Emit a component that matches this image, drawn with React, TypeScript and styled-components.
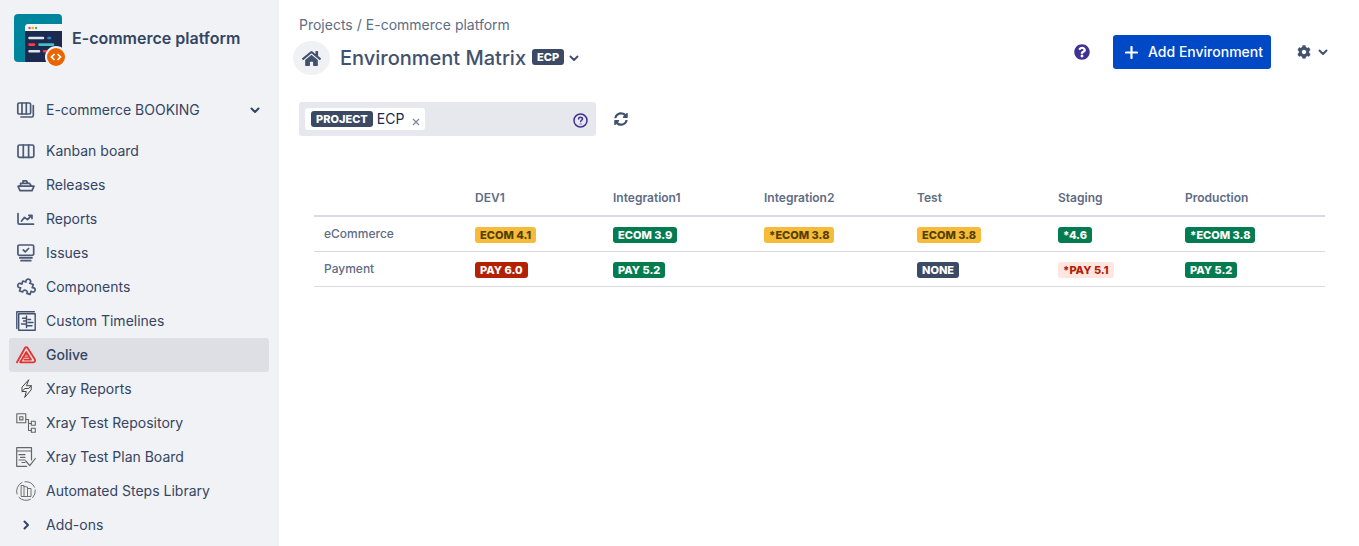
import React from "react";
import styled, { createGlobalStyle, css } from "styled-components";
import { FaCog, FaHome, FaQuestionCircle, FaSyncAlt } from "react-icons/fa";

const colors = {
  navy: "#344563",
  slate: "#42526e",
  muted: "#5e6c84",
  line: "#d8dce2",
  sidebar: "#f1f2f6",
  blue: "#0049c6",
  purple: "#403294",
};

const GlobalStyle = createGlobalStyle`
  *, *::before, *::after { box-sizing: border-box; }
  body {
    margin: 0;
    background: #fff;
    color: ${colors.navy};
    font: 14px/20px Inter, "Liberation Sans", sans-serif;
  }
  button, input { font: inherit; color: inherit; }
  svg { display: block; flex: none; }
`;

const Page = styled.div`
  display: flex;
  min-height: 100vh;
`;

const Sidebar = styled.aside`
  flex: 0 0 279px;
  padding: 14px 10px 4px 9px;
  background: ${colors.sidebar};
`;

const ProjectHeader = styled.div`
  display: flex;
  align-items: center;
  gap: 6px;
  padding-left: 5px;
  height: 54px;
  margin-bottom: 25px;
`;

const ProjectName = styled.h2`
  margin: 0;
  padding-bottom: 6px;
  font-size: 16px;
  line-height: 24px;
  font-weight: 600;
`;

const navRow = css`
  display: flex;
  align-items: center;
  gap: 10px;
  width: 100%;
  height: 34px;
  padding: 0 9px 0 7px;
  border: 0;
  border-radius: 3px;
  color: ${colors.navy};
  text-align: left;
  text-decoration: none;
`;

const BoardSwitcher = styled.button`
  ${navRow}
  margin-bottom: 7px;
  background: transparent;
`;

const NavLabel = styled.span`
  flex: 1;
`;

const NavList = styled.nav`
  display: flex;
  flex-direction: column;
`;

const NavLink = styled.a<{ $active?: boolean }>`
  ${navRow}
  background: ${(p) => (p.$active ? "#dedfe4" : "transparent")};
  font-weight: ${(p) => (p.$active ? 500 : 400)};
`;

const Main = styled.main`
  flex: 1;
  min-width: 0;
  padding: 15px 31px 24px 20px;
`;

const Header = styled.header`
  display: flex;
  justify-content: space-between;
  align-items: flex-start;
  margin-bottom: 27px;
`;

const Breadcrumbs = styled.nav`
  display: flex;
  gap: 4px;
  margin-bottom: 6px;
  color: ${colors.muted};
`;

const Crumb = styled.a`
  color: inherit;
  text-decoration: none;
`;

const TitleRow = styled.div`
  display: flex;
  align-items: center;
  margin-left: -6px;
`;

const HomeLink = styled.a`
  display: grid;
  place-items: center;
  width: 37px;
  height: 34px;
  margin-right: 10px;
  border-radius: 50%;
  background: #f0f1f5;
  color: ${colors.slate};
`;

const Title = styled.h1`
  margin: 0 6px 0 0;
  color: ${colors.slate};
  font-size: 20px;
  line-height: 32px;
  font-weight: 500;
`;

const tones = {
  dark: ["#3b4964", "#fff"],
  yellow: ["#f6bb38", "#533f04"],
  green: ["#047c50", "#fff"],
  red: ["#b32102", "#fff"],
  softRed: ["#ffe6e1", "#b32102"],
};
type Tone = keyof typeof tones;

const Lozenge = styled.span<{ $tone: Tone }>`
  display: inline-block;
  padding: 0 5px;
  border-radius: 3px;
  background: ${(p) => tones[p.$tone][0]};
  color: ${(p) => tones[p.$tone][1]};
  font-size: 11px;
  line-height: 16px;
  font-weight: 800;
  white-space: nowrap;
  vertical-align: top;
`;

const TitleBadge = styled(Lozenge)`
  margin-bottom: 3px;
`;

const IconButton = styled.button`
  display: flex;
  align-items: center;
  gap: 7px;
  padding: 0;
  border: 0;
  background: transparent;
  color: ${colors.slate};
`;

const TitleMenu = styled(IconButton)`
  margin-left: 5px;
`;

const Actions = styled.div`
  display: flex;
  align-items: center;
  padding-top: 20px;
`;

const HelpButton = styled(IconButton)`
  margin-right: 23px;
  color: ${colors.purple};
`;

const AddButton = styled.button`
  display: flex;
  align-items: center;
  gap: 10px;
  height: 34px;
  margin-right: 26px;
  padding: 0 8px 0 12px;
  border: 0;
  border-radius: 3px;
  background: ${colors.blue};
  color: #fff;
  font-weight: 500;
  white-space: nowrap;
`;

const FilterBar = styled.form`
  display: flex;
  align-items: center;
  gap: 18px;
  margin-bottom: 44px;
`;

const FilterBox = styled.div`
  display: flex;
  align-items: center;
  width: 297px;
  height: 34px;
  padding: 0 8px 0 6px;
  border-radius: 3px;
  background: #e7e8ee;
`;

const Chip = styled.span`
  display: flex;
  align-items: center;
  gap: 4px;
  height: 22px;
  padding: 0 5px 0 6px;
  border-radius: 3px;
  background: #fff;
  color: #172b4d;
`;

const ChipRemove = styled(IconButton)`
  margin-left: 4px;
  padding-top: 6px;
  color: #7a869a;
`;

const FilterInput = styled.input`
  flex: 1;
  min-width: 0;
  height: 22px;
  border: 0;
  outline: 0;
  background: transparent;
`;

const FilterHelp = styled(IconButton)`
  padding-top: 2px;
  color: ${colors.purple};
`;

const TableWrap = styled.div`
  padding: 0 3px 0 15px;
`;

const Matrix = styled.table`
  width: 100%;
  table-layout: fixed;
  border-collapse: separate;
  border-spacing: 0;
  color: ${colors.muted};
  font-size: 12px;
  line-height: 16px;

  th, td {
    padding: 10px 10px 9px;
    text-align: left;
    vertical-align: top;
    font-weight: 600;
    border-bottom: 1px solid ${colors.line};
  }
  thead th, thead td {
    border-bottom-width: 2px;
  }
  tbody th, tbody td {
    height: 35px;
    padding: 10px 10px 8px;
  }
  tbody th {
    padding: 9px 10px;
    font-weight: 500;
  }
`;

const Chevron = ({ right }: { right?: boolean }) => (
  <svg width={right ? 20 : 10} height="10" viewBox="0 0 10 10" fill="none" stroke="currentColor" strokeWidth="2" strokeLinecap="round" strokeLinejoin="round" aria-hidden="true">
    <path d={right ? "M3.500 1.500 7 5 3.500 8.500" : "M1.500 3.500 5 7l3.500-3.500"} />
  </svg>
);

const NavIcon = ({ children, color = "#4a5975", width = 1.7 }: { children: React.ReactNode; color?: string; width?: number }) => (
  <svg width="20" height="20" viewBox="0 0 20 20" fill="none" stroke={color} strokeWidth={width} strokeLinejoin="round" strokeLinecap="round" aria-hidden="true">
    {children}
  </svg>
);

const BoardsIcon = () => (
  <NavIcon>
    <rect x="1.800" y="3" width="12.800" height="11" rx="1.200" />
    <path d="M6 3v11M10.300 3v11M17.300 5.500v10a1.500 1.500 0 0 1-1.500 1.500H5" />
  </NavIcon>
);
const KanbanIcon = () => (
  <NavIcon>
    <rect x="2" y="4" width="15.800" height="12.300" rx="1.500" />
    <path d="M7.300 4v12.300M12.600 4v12.300" />
  </NavIcon>
);
const ReleasesIcon = () => (
  <NavIcon>
    <path d="M2 11.200h16l-2 4.500H4zM4.600 11V8.300h8.800L15.400 11M7 8.200V5.800h3.500l1.200 2.400" />
  </NavIcon>
);
const ReportsIcon = () => (
  <NavIcon>
    <path d="M2 4.500v9.200c0 .9.500 1.500 1.500 1.500h14M5.500 12l3-3.600 3 2.300 4.200-4.300M12.800 6.300h3.200v3.200" />
  </NavIcon>
);
const IssuesIcon = () => (
  <NavIcon>
    <rect x="1.900" y="2" width="15.800" height="10.300" rx="1.500" />
    <path d="m7.300 7 2 1.800 3.300-3.300M3.800 14.900h12.200M5 17.700h9.800" />
  </NavIcon>
);
const ComponentsIcon = () => (
  <NavIcon>
    <path
      transform="rotate(18 10.500 10.500)"
      d="M5 5.500h3.300C7.300 3.400 8.500 1.900 10.300 1.900s3 1.500 2 3.600H16v3.300c2-.9 3.500.2 3.500 1.900s-1.500 2.800-3.500 1.900V16h-3.300c.6-1.600-.7-2.500-2.200-2.500S7.700 14.400 8.300 16H5v-3.400c-2 .9-3.500-.2-3.500-1.900S3 7.900 5 8.800z"
    />
  </NavIcon>
);
const TimelinesIcon = () => (
  <NavIcon width={1.4} color="#42526e">
    <path d="M.8 17.500V.8h17.500" />
    <path d="M2.700 2.700h16.500v16.500H2.700zM10.500 5v11.500" />
    <path d="M6.500 7.200h4M7.500 10h3M5.500 13h5M12 8.500h2.500M12 11.500h5M11 14.700h5" />
  </NavIcon>
);
const GoliveIcon = () => (
  <NavIcon color="#e5322d" width={1.8}>
    <path d="M1 17.300 8.900 3c.7-1.200 2-1.200 2.700 0l7.200 11.300c.8 1.500 0 3-1.500 3H4.200L10.300 7l4.700 7.600H8.500" />
    <path d="M9.500 9.800h1.700M8.500 12.200h4" strokeWidth="1.300" />
  </NavIcon>
);
const BoltIcon = () => (
  <NavIcon color="#444" width={1}>
    <path d="M12.500 1 6 8.200v4.300h4.300L8.700 18.500l6.500-7.700V6.700h-4.300zM6 12.500l3-3h3.500l2.700-2.800" />
  </NavIcon>
);
const RepositoryIcon = () => (
  <NavIcon color="#666" width={1.1}>
    <rect x=".8" y=".8" width="9" height="9" />
    <rect x="3.700" y="3.700" width="3.200" height="3.200" />
    <path d="M9.800 6.500h2.700v11h3M12.500 10.500h3" />
    <rect x="15.300" y="8.300" width="4" height="4" />
    <rect x="15.300" y="15.300" width="4" height="4" />
  </NavIcon>
);
const PlanIcon = () => (
  <NavIcon color="#666" width={1.2}>
    <path d="M15.500 13V.7H.7v18.600h10M.7 4h14.800M3 7.700h6M4.500 10.300H9M3 13h6M6 15.500h3M9.800 14l4 4.700 5.500-7.200" />
  </NavIcon>
);
const LibraryIcon = () => (
  <NavIcon color="#707070" width={1}>
    <path d="M1 13A9.500 9.500 0 0 1 6 1.500M9 .7a9.500 9.500 0 0 1 9.500 5.500M19.300 9a9.500 9.500 0 0 1-2.600 7.500M14.500 18.300A9.500 9.500 0 0 1 3 16.500" />
    <path d="M5.500 4.500H8v11H5.500zM8 5.500l3.500.5v9.500H8M11.500 7.500h3.500v8h-3.500" />
  </NavIcon>
);

const ProjectAvatar = () => (
  <svg width="52" height="54" viewBox="0 0 52 54" role="img" aria-label="E-commerce platform">
    <defs><clipPath id="avatar"><rect width="48" height="48" rx="4" /></clipPath></defs>
    <g clipPath="url(#avatar)">
      <rect width="48" height="48" fill="#00869c" />
      <path d="M11 48V13a3 3 0 0 1 3-3h34v38z" fill="#1b2a4e" />
      <path d="M11 17v-4a3 3 0 0 1 3-3h34v7z" fill="#f4f5f7" />
    </g>
    <circle cx="15.500" cy="14" r="1.200" fill="#ff3d3d" />
    <circle cx="18.800" cy="14" r="1.200" fill="#ffab00" />
    <circle cx="22" cy="14" r="1.200" fill="#36b37e" />
    <g strokeWidth="2.600" strokeLinecap="round">
      <path d="M15.500 24h13.500M15.500 37.300H25" stroke="#dfe5ef" />
      <path d="M34.500 24h1.500" stroke="#2684d8" />
      <path d="M15.500 30.600H20M30 37.300h2" stroke="#ff3d3d" />
      <path d="M25.500 30.600H39" stroke="#45bfc1" />
    </g>
    <circle cx="42" cy="43" r="11" fill={colors.sidebar} />
    <circle cx="42" cy="43" r="9" fill="#ea6500" />
    <path d="m40.500 40-3 3 3 3M43.500 40l3 3-3 3" fill="none" stroke="#fff" strokeWidth="1.700" />
  </svg>
);

const NAV: { label: string; icon: React.ReactNode; active?: boolean }[] = [
  { label: "Kanban board", icon: <KanbanIcon /> },
  { label: "Releases", icon: <ReleasesIcon /> },
  { label: "Reports", icon: <ReportsIcon /> },
  { label: "Issues", icon: <IssuesIcon /> },
  { label: "Components", icon: <ComponentsIcon /> },
  { label: "Custom Timelines", icon: <TimelinesIcon /> },
  { label: "Golive", icon: <GoliveIcon />, active: true },
  { label: "Xray Reports", icon: <BoltIcon /> },
  { label: "Xray Test Repository", icon: <RepositoryIcon /> },
  { label: "Xray Test Plan Board", icon: <PlanIcon /> },
  { label: "Automated Steps Library", icon: <LibraryIcon /> },
  { label: "Add-ons", icon: <Chevron right /> },
];

const COLUMNS = [
  { name: "DEV1", width: 138 },
  { name: "Integration1", width: 151 },
  { name: "Integration2", width: 153 },
  { name: "Test", width: 141 },
  { name: "Staging", width: 127 },
  { name: "Production", width: 150 },
];

type Cell = { text: string; tone: Tone } | null;
const ROWS: { name: string; cells: Cell[] }[] = [
  {
    name: "eCommerce",
    cells: [
      { text: "ECOM 4.1", tone: "yellow" },
      { text: "ECOM 3.9", tone: "green" },
      { text: "*ECOM 3.8", tone: "yellow" },
      { text: "ECOM 3.8", tone: "yellow" },
      { text: "*4.6", tone: "green" },
      { text: "*ECOM 3.8", tone: "green" },
    ],
  },
  {
    name: "Payment",
    cells: [
      { text: "PAY 6.0", tone: "red" },
      { text: "PAY 5.2", tone: "green" },
      null,
      { text: "NONE", tone: "dark" },
      { text: "*PAY 5.1", tone: "softRed" },
      { text: "PAY 5.2", tone: "green" },
    ],
  },
];

export default function App() {
  return (
    <Page>
      <GlobalStyle />
      <Sidebar>
        <ProjectHeader>
          <ProjectAvatar />
          <ProjectName>E-commerce platform</ProjectName>
        </ProjectHeader>
        <BoardSwitcher type="button">
          <BoardsIcon />
          <NavLabel>E-commerce BOOKING</NavLabel>
          <Chevron />
        </BoardSwitcher>
        <NavList aria-label="Project">
          {NAV.map((item) => (
            <NavLink key={item.label} href="#" $active={item.active} aria-current={item.active ? "page" : undefined}>
              {item.icon}
              <NavLabel>{item.label}</NavLabel>
            </NavLink>
          ))}
        </NavList>
      </Sidebar>
      <Main>
        <Header>
          <div>
            <Breadcrumbs aria-label="Breadcrumbs">
              <Crumb href="#">Projects</Crumb>
              <span>/</span>
              <Crumb href="#">E-commerce platform</Crumb>
            </Breadcrumbs>
            <TitleRow>
              <HomeLink href="#" aria-label="Home"><FaHome size={19} /></HomeLink>
              <Title>Environment Matrix</Title>
              <TitleBadge $tone="dark">ECP</TitleBadge>
              <TitleMenu type="button" aria-label="Switch matrix"><Chevron /></TitleMenu>
            </TitleRow>
          </div>
          <Actions>
            <HelpButton type="button" aria-label="Help"><FaQuestionCircle size={16} /></HelpButton>
            <AddButton type="button">
              <svg width="13" height="13" viewBox="0 0 13 13" stroke="currentColor" strokeWidth="2.200" strokeLinecap="round" aria-hidden="true">
                <path d="M6.500 1v11M1 6.500h11" />
              </svg>
              Add Environment
            </AddButton>
            <IconButton type="button" aria-label="Settings">
              <FaCog size={14} />
              <Chevron />
            </IconButton>
          </Actions>
        </Header>
        <FilterBar>
          <FilterBox>
            <Chip>
              <Lozenge $tone="dark">PROJECT</Lozenge>
              ECP
              <ChipRemove type="button" aria-label="Remove filter">
                <svg width="8" height="8" viewBox="0 0 8 8" stroke="currentColor" strokeWidth="1.200" aria-hidden="true"><path d="m1 1 6 6M7 1 1 7" /></svg>
              </ChipRemove>
            </Chip>
            <FilterInput aria-label="Filter" />
            <FilterHelp type="button" aria-label="Filter help">
              <svg width="15" height="15" viewBox="0 0 15 15" fill="none" stroke="currentColor" strokeWidth="1.500" strokeLinecap="round" aria-hidden="true">
                <circle cx="7.500" cy="7.500" r="6.500" />
                <path d="M5.600 6c0-2.500 3.900-2.400 3.900-.1 0 1.300-1.900 1.400-1.900 2.700" />
                <circle cx="7.600" cy="10.900" r=".2" />
              </svg>
            </FilterHelp>
          </FilterBox>
          <IconButton type="button" aria-label="Refresh"><FaSyncAlt size={14} /></IconButton>
        </FilterBar>
        <TableWrap>
          <Matrix>
            <colgroup>
              <col width={151} />
              {COLUMNS.map((c) => <col key={c.name} width={c.width} />)}
            </colgroup>
            <thead>
              <tr>
                <td />
                {COLUMNS.map((c) => <th key={c.name} scope="col">{c.name}</th>)}
              </tr>
            </thead>
            <tbody>
              {ROWS.map((row) => (
                <tr key={row.name}>
                  <th scope="row">{row.name}</th>
                  {row.cells.map((cell, i) => (
                    <td key={COLUMNS[i].name}>{cell && <Lozenge $tone={cell.tone}>{cell.text}</Lozenge>}</td>
                  ))}
                </tr>
              ))}
            </tbody>
          </Matrix>
        </TableWrap>
      </Main>
    </Page>
  );
}
